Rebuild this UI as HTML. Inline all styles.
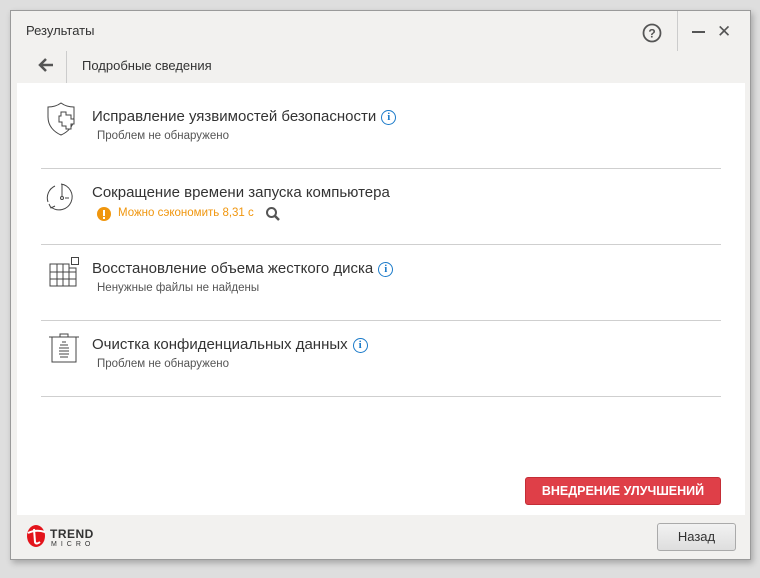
<!DOCTYPE html>
<html><head><meta charset="utf-8"><style>
*{margin:0;padding:0;box-sizing:border-box}
body{width:760px;height:578px;background:#dedede;font-family:"Liberation Sans","DejaVu Sans",sans-serif;position:relative;overflow:hidden}
.win{position:absolute;left:10px;top:10px;width:741px;height:550px;background:#f2f1ef;border:1px solid #9a9a9a;box-shadow:2px 3px 6px rgba(0,0,0,.25)}
.abs{position:absolute}
.panel{position:absolute;left:6px;top:72px;width:728px;height:432px;background:#fff}
.t{font-size:15px;color:#333}
.s{font-size:11.5px;color:#555}
.hr{position:absolute;left:30px;width:680px;height:1px;background:#cfcfcf}
.info{display:inline-block;width:15px;height:15px;border:1.5px solid #1a7ac9;border-radius:50%;color:#1a7ac9;font:bold 11px "Liberation Serif",serif;text-align:center;line-height:12px;vertical-align:1px;margin-left:5px}
</style></head><body>
<div class="win">
<div class="abs" style="left:15px;top:12px;font-size:13px;color:#333">Результаты</div>
<svg class="abs" style="left:630px;top:11px" width="22" height="22"><circle cx="11" cy="11" r="8.5" fill="none" stroke="#555" stroke-width="1.8"/><text x="11" y="15.5" font-size="12" font-weight="bold" fill="#555" text-anchor="middle" font-family="Liberation Sans">?</text></svg>
<div class="abs" style="left:666px;top:0;width:1px;height:40px;background:#ccc"></div>
<div class="abs" style="left:681px;top:20px;width:13px;height:2px;background:#555"></div>
<div class="abs" style="left:706px;top:11px;font-size:17px;font-weight:bold;color:#555">✕</div>
<svg class="abs" style="left:25px;top:44px" width="20" height="20"><path d="M17 10H4M10 4L4 10L10 16" fill="none" stroke="#555" stroke-width="2.5"/></svg>
<div class="abs" style="left:55px;top:40px;width:1px;height:32px;background:#ccc"></div>
<div class="abs" style="left:71px;top:47px;font-size:13px;color:#333">Подробные сведения</div>
<div class="panel">
<svg class="abs" style="left:28px;top:18px" width="36" height="38"><path d="M16 2C12 5 7 6 3 6V16C3 25 9 31 16 34C23 31 29 25 29 16V6C25 6 20 5 16 2Z" fill="none" stroke="#444" stroke-width="1"/><path d="M16 11h5v3h5v4h3v5h-3v5h-5v-3h-4v-4h-3v-6h2z" fill="#fff" stroke="#444" stroke-width="1"/></svg>
<div class="abs t" style="left:75px;top:25px">Исправление уязвимостей безопасности<span class="info">i</span></div>
<div class="abs s" style="left:80px;top:47px">Проблем не обнаружено</div>
<div class="hr" style="top:85px;left:24px"></div>
<svg class="abs" style="left:28px;top:97px" width="36" height="36"><path d="M16 4A13 13 0 1 1 6 27" fill="none" stroke="#444" stroke-width="1"/><path d="M3 22A13 13 0 0 1 10 6" fill="none" stroke="#444" stroke-width="1"/><path d="M4 24l2 4 4-2" fill="none" stroke="#444"/><path d="M17 4v12" stroke="#444"/><circle cx="17" cy="18" r="1.5" fill="none" stroke="#444"/><path d="M20 18h4" stroke="#444"/></svg>
<div class="abs t" style="left:75px;top:101px">Сокращение времени запуска компьютера</div>
<svg class="abs" style="left:80px;top:124px" width="15" height="15"><circle cx="7" cy="7" r="7" fill="#f0960e"/><rect x="6" y="3" width="2" height="6" fill="#fff"/><rect x="6" y="10" width="2" height="2" fill="#fff"/></svg>
<div class="abs s" style="left:101px;top:124px;color:#f0960e">Можно сэкономить 8,31 с</div>
<svg class="abs" style="left:248px;top:123px" width="16" height="16"><circle cx="6.5" cy="6.5" r="4.5" fill="none" stroke="#555" stroke-width="2"/><path d="M10 10l4 4" stroke="#555" stroke-width="2.5"/></svg>
<div class="hr" style="top:161px;left:24px"></div>
<svg class="abs" style="left:30px;top:173px" width="36" height="36"><path d="M3 8h19v4h7v18H3z" fill="none" stroke="#444"/><path d="M10 8v22M16 8v22M22 12v18M3 16h26M3 23h26" stroke="#444"/><rect x="24.5" y="1.5" width="7" height="7" fill="none" stroke="#444"/></svg>
<div class="abs t" style="left:75px;top:177px">Восстановление объема жесткого диска<span class="info">i</span></div>
<div class="abs s" style="left:80px;top:199px">Ненужные файлы не найдены</div>
<div class="hr" style="top:237px;left:24px"></div>
<svg class="abs" style="left:30px;top:248px" width="36" height="36"><path d="M2 6h30M13 6V3h8v3M5 6v25h24V6" fill="none" stroke="#444"/><path d="M15 11h4M13 14h8M12 17h10M12 20h10M12 23h10M13 26h8" stroke="#444"/></svg>
<div class="abs t" style="left:75px;top:253px">Очистка конфиденциальных данных<span class="info">i</span></div>
<div class="abs s" style="left:80px;top:275px">Проблем не обнаружено</div>
<div class="hr" style="top:313px;left:24px"></div>
<div class="abs" style="left:508px;top:394px;width:196px;height:28px;background:#df3f48;border:1px solid #c42d36;border-radius:3px;color:#fff;font-size:12.5px;font-weight:bold;text-align:center;line-height:26px">ВНЕДРЕНИЕ УЛУЧШЕНИЙ</div>
</div>
<svg class="abs" style="left:14px;top:512px" width="22" height="26"><ellipse cx="11" cy="13" rx="9" ry="11" fill="#e3141b"/><path d="M3 10Q11 6 20 9M9 6L10 19Q11 22 15 19" fill="none" stroke="#fff" stroke-width="2"/></svg>
<div class="abs" style="left:39px;top:516px;font-size:12px;font-weight:bold;color:#333;letter-spacing:.5px">TREND</div>
<div class="abs" style="left:40px;top:530px;font-size:7px;color:#333;letter-spacing:4px">MICRO</div>
<div class="abs" style="left:646px;top:512px;width:79px;height:28px;background:linear-gradient(#f2f2f2,#dedede);border:1px solid #aaa;border-radius:3px;font-size:13px;color:#333;text-align:center;line-height:26px">Назад</div>
</div>
</body></html>
